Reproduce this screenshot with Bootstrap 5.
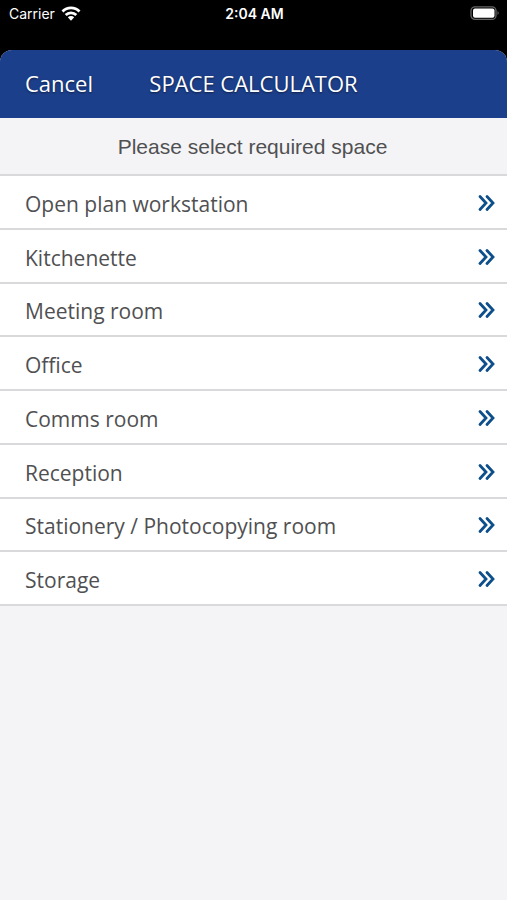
<!DOCTYPE html>
<html lang="en">
<head>
<meta charset="utf-8">
<meta name="viewport" content="width=device-width, initial-scale=1">
<title>Space Calculator</title>
<link href="https://cdn.jsdelivr.net/npm/bootstrap@5.3.0/dist/css/bootstrap.min.css" rel="stylesheet">
<style>
body{background:#000;font-family:"Open Sans",sans-serif;color:#505052}
.status-bar{height:50px;padding:5px 7px 0 9px;font-family:Inter,sans-serif;font-size:14px;line-height:18px;color:#fff}
.status-side{flex:1 1 0;gap:6px}
.clock{font-weight:600}
.sheet{background:#f4f4f6;border-radius:12px 12px 0 0}
.sheet-header{background:#1c3f8b;min-height:68px;color:#fff;padding:0 25px 2px;display:grid;grid-template-columns:1fr auto 1fr;align-items:center}
.cancel-btn,.cancel-btn:hover{color:#fff;font-size:22px;line-height:32px;text-shadow:0 1px 2px rgba(0,0,0,.5)}
.sheet-title{font-size:22px;line-height:32px;font-weight:400;text-shadow:0 1px 2px rgba(0,0,0,.5)}
.prompt{padding:15px 12px 14px 10px;font-family:"Liberation Sans",sans-serif;font-size:21px;line-height:27px;border-bottom:2px solid #d9d9db}
.space-list{--bs-list-group-border-radius:0;min-height:430px}
.space-row{flex:1 1 0;padding:4px 12px 0 25px;border:0;border-bottom:2px solid #d9d9db;font-size:21px;line-height:30px;color:#505052;background:#fff}
.chevrons{width:18px;height:18px;margin-bottom:2px}
</style>
<script src="https://cdn.jsdelivr.net/npm/bootstrap@5.3.0/dist/js/bootstrap.bundle.min.js" defer></script>
</head>
<body class="min-vh-100 d-flex flex-column">
<svg class="d-none" aria-hidden="true"><symbol id="chevrons" viewBox="0 0 18 18"><path d="M3 2.500l6 6.500-6 6.500M10 2.500l6 6.500-6 6.500" fill="none" stroke="#0d4f8b" stroke-width="2.800" stroke-linecap="round"/></symbol></svg>
<div class="status-bar d-flex align-items-start">
<div class="status-side d-flex align-items-center"><span>Carrier</span>
<svg width="20" height="16" viewBox="0 0 20 16" fill="none" stroke="#fff" stroke-width="2.800" aria-label="Wi-Fi"><path d="M1.500 5.500a12 12 0 0 1 17 0M4.700 9a7.600 7.600 0 0 1 10.600 0"/><path d="M10 14.800l-3.200-3.500a4.500 4.500 0 0 1 6.400 0z" fill="#fff" stroke="none"/></svg></div>
<span class="clock">2:04 AM</span>
<div class="status-side d-flex justify-content-end"><svg width="30" height="18" viewBox="0 0 30 18" aria-label="Battery"><rect x="1" y="1.800" width="25" height="12.600" rx="4" fill="none" stroke="#666" stroke-width="1.300"/><rect x="3" y="3.500" width="21.500" height="9.300" rx="2" fill="#fff"/><path d="M27.500 6q2.500 2 0 4z" fill="#666"/></svg></div>
</div>
<main class="sheet flex-grow-1 overflow-hidden">
<header class="sheet-header"><button type="button" class="cancel-btn btn p-0 border-0 text-start">Cancel</button><h1 class="sheet-title m-0">SPACE CALCULATOR</h1></header>
<p class="prompt m-0 text-center">Please select required space</p>
<nav class="space-list list-group" aria-label="Spaces">
<a href="#" class="space-row list-group-item d-flex align-items-center justify-content-between">Open plan workstation<svg class="chevrons" aria-hidden="true"><use href="#chevrons"/></svg></a>
<a href="#" class="space-row list-group-item d-flex align-items-center justify-content-between">Kitchenette<svg class="chevrons" aria-hidden="true"><use href="#chevrons"/></svg></a>
<a href="#" class="space-row list-group-item d-flex align-items-center justify-content-between">Meeting room<svg class="chevrons" aria-hidden="true"><use href="#chevrons"/></svg></a>
<a href="#" class="space-row list-group-item d-flex align-items-center justify-content-between">Office<svg class="chevrons" aria-hidden="true"><use href="#chevrons"/></svg></a>
<a href="#" class="space-row list-group-item d-flex align-items-center justify-content-between">Comms room<svg class="chevrons" aria-hidden="true"><use href="#chevrons"/></svg></a>
<a href="#" class="space-row list-group-item d-flex align-items-center justify-content-between">Reception<svg class="chevrons" aria-hidden="true"><use href="#chevrons"/></svg></a>
<a href="#" class="space-row list-group-item d-flex align-items-center justify-content-between">Stationery / Photocopying room<svg class="chevrons" aria-hidden="true"><use href="#chevrons"/></svg></a>
<a href="#" class="space-row list-group-item d-flex align-items-center justify-content-between">Storage<svg class="chevrons" aria-hidden="true"><use href="#chevrons"/></svg></a>
</nav>
</main>
</body>
</html>
